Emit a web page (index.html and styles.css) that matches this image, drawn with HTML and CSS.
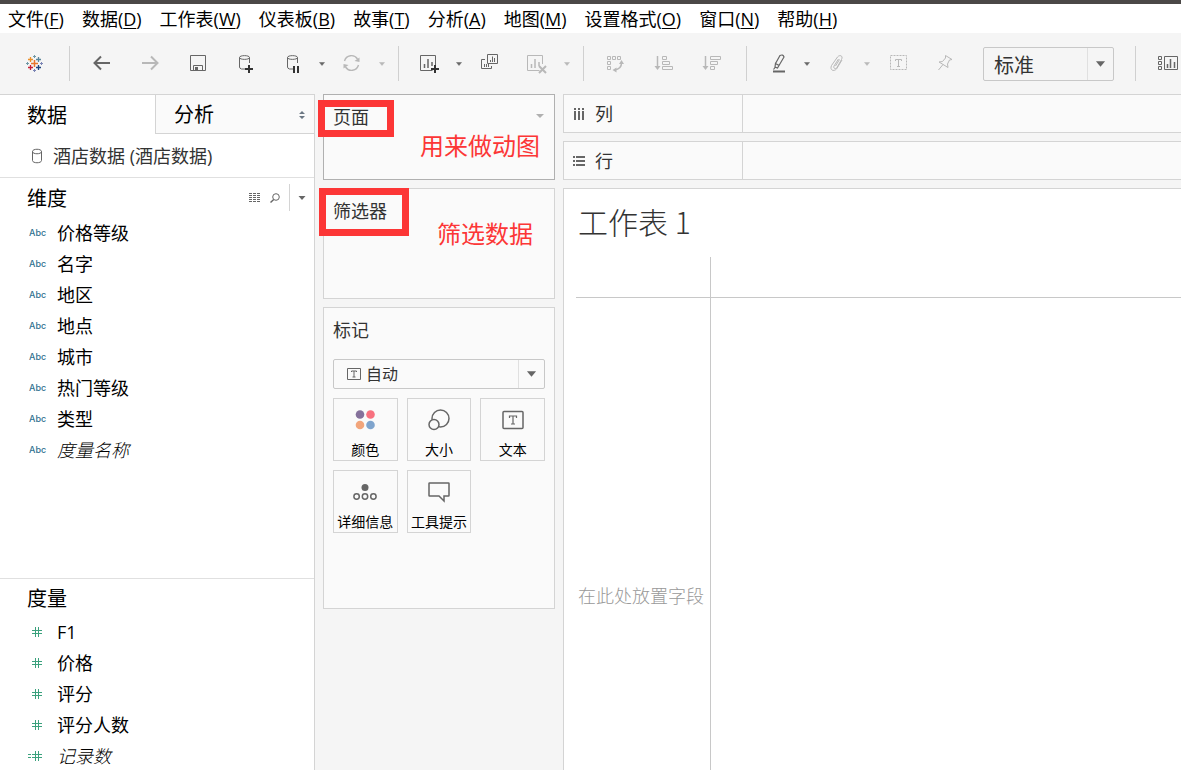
FILE: index.html
```html
<!DOCTYPE html>
<html lang="zh-CN">
<head>
<meta charset="utf-8">
<meta name="viewport" content="width=device-width, initial-scale=1">
<title>工作表 1</title>
<link rel="stylesheet" href="styles.css">
</head>
<body>
<svg class="sprite" aria-hidden="true">
  <symbol id="caret" viewBox="0 0 12 12"><path d="M3.500 4.500h5L6 7.500z" fill="currentColor" stroke="currentColor" stroke-width=".5"/></symbol>
  <symbol id="arrow" viewBox="0 0 12 12"><path d="M1 3h10L6 9z" fill="currentColor"/></symbol>
  <symbol id="db" viewBox="0 0 24 24"><path d="M11 18H7.500Q5.500 17.500 5.500 16V6.500C5.500 4 15.500 4 15.500 6.500V12M5.500 6.500C5.500 9 15.500 9 15.500 6.500" fill="none" stroke="currentColor"/></symbol>
  <symbol id="hash" viewBox="0 0 16 16"><path d="M6.500 3v10M9.500 3v10M3 6.500h10M3 9.500h10" fill="none" stroke="currentColor"/></symbol>
</svg>
<div class="app">
  <div class="strip"></div>
  <nav class="menu">
    <button>文件(<u>F</u>)</button>
    <button>数据(<u>D</u>)</button>
    <button>工作表(<u>W</u>)</button>
    <button>仪表板(<u>B</u>)</button>
    <button>故事(<u>T</u>)</button>
    <button>分析(<u>A</u>)</button>
    <button>地图(<u>M</u>)</button>
    <button>设置格式(<u>O</u>)</button>
    <button>窗口(<u>N</u>)</button>
    <button>帮助(<u>H</u>)</button>
  </nav>

  <div class="toolbar">
    <div class="group group-home">
      <button class="tool" aria-label="开始页面"><svg viewBox="0 0 24 24" fill="none">
        <path d="M12.500 9v7M9 12.500h7" stroke="#e8762c" stroke-width="1.500"/>
        <path d="M8.500 6v5M6 8.500h5" stroke="#eb912b" stroke-width="1.300"/>
        <path d="M16.500 6v5M14 8.500h5" stroke="#5b879b" stroke-width="1.300"/>
        <path d="M8.500 14v5M6 16.500h5" stroke="#c72035" stroke-width="1.300"/>
        <path d="M16.500 14v5M14 16.500h5" stroke="#1f457e" stroke-width="1.300"/>
        <path d="M12.500 4v3M11 5.500h3M5.500 11v3M4 12.500h3" stroke="#7099a6"/>
        <path d="M19.500 11v3M18 12.500h3M12.500 18v3M11 19.500h3" stroke="#7b85b5"/></svg></button>
    </div>
    <div class="group">
      <button class="tool" aria-label="撤消"><svg viewBox="0 0 24 24" fill="none" stroke="currentColor" stroke-width="2"><path d="M20 12H5M11 5.500L4.500 12l6.500 6.500"/></svg></button>
      <button class="tool" aria-label="重做" disabled><svg viewBox="0 0 24 24" fill="none" stroke="currentColor" stroke-width="2"><path d="M4 12h15M13 5.500l6.500 6.500-6.500 6.500"/></svg></button>
      <button class="tool" aria-label="保存"><svg viewBox="0 0 24 24" fill="none" stroke="currentColor"><path d="M4.500 4.500h15v15h-15zM7.500 19.500v-5h9v5"/><path d="M9 16h3v3H9z" fill="currentColor" stroke="none"/></svg></button>
      <button class="tool" aria-label="新建数据源"><svg viewBox="0 0 24 24"><use href="#db"/><path d="M15 14v8M11 18h8" stroke="#333" stroke-width="2"/></svg></button>
      <span class="split">
        <button class="tool" aria-label="暂停自动更新"><svg viewBox="0 0 24 24"><use href="#db"/><path d="M12 15v7M16 15v7" stroke="#333" stroke-width="2"/></svg></button>
        <button class="drop" aria-label="更新选项"><svg><use href="#caret"/></svg></button>
      </span>
      <span class="split">
        <button class="tool" aria-label="运行更新" disabled><svg viewBox="0 0 24 24" fill="none" stroke="currentColor" stroke-width="1.400"><path d="M2.500 10a7.200 7.200 0 0 1 13-2M16.500 14a7.200 7.200 0 0 1-13 2"/><path d="M17.500 6.500v4.500l-5-1zM1.500 17.500V13l5 1z" fill="currentColor" stroke="none"/></svg></button>
        <button class="drop" aria-label="运行更新选项" disabled><svg><use href="#caret"/></svg></button>
      </span>
    </div>
    <div class="group">
      <span class="split">
        <button class="tool" aria-label="新建工作表"><svg viewBox="0 0 24 24" fill="none" stroke="currentColor"><path d="M13.500 19.500h-12v-15h15V14"/><path d="M5.500 17v-4M9 17V8M13 15v-4" stroke-width="1.500"/><path d="M16 14v8M12 18h8" stroke="#333" stroke-width="2"/></svg></button>
        <button class="drop" aria-label="新建选项"><svg><use href="#caret"/></svg></button>
      </span>
      <button class="tool" aria-label="复制"><svg viewBox="0 0 24 24" fill="none" stroke="currentColor"><path d="M8.500 3.500h10v9h-10zM6 8.500H2.500v9h10V15"/><path d="M11.500 11V9M13.500 11V5.500M15.500 11V7M5.500 16v-3M7.500 16v-3M9.500 16v-3"/></svg></button>
      <span class="split">
        <button class="tool" aria-label="清除工作表" disabled><svg viewBox="0 0 24 24" fill="none" stroke="currentColor"><path d="M12.500 19.500h-12v-15h15V13"/><path d="M4.500 17v-4M8 17V8M12 15v-4" stroke-width="1.500"/><path d="M12 15l7 7M19 15l-7 7" stroke-width="2"/></svg></button>
        <button class="drop" aria-label="清除选项" disabled><svg><use href="#caret"/></svg></button>
      </span>
    </div>
    <div class="group group-sort">
      <button class="tool" aria-label="交换行和列" disabled><svg viewBox="0 0 24 24" fill="none" stroke="currentColor"><path d="M3.500 5.500h3v3h-3zM8.500 5.500h3v3h-3zM13.500 5.500h3v3h-3zM3.500 10.500h3v3h-3zM3.500 15.500h3v3h-3z"/><path d="M17.500 12q0 6-7 7" stroke-width="1.500"/><path d="M17.500 9l2.500 4h-5zM8.500 19l4-2.500v5z" fill="currentColor" stroke="none"/></svg></button>
      <button class="tool" aria-label="升序排序" disabled><svg viewBox="0 0 24 24" fill="none" stroke="currentColor"><path d="M5.500 5v11" stroke-width="1.500"/><path d="M2.500 15h6l-3 4z" fill="currentColor" stroke="none"/><path d="M10.500 5.500h4v3h-4zM10.500 10.500h7v3h-7zM10.500 15.500h10v3h-10z"/></svg></button>
      <button class="tool" aria-label="降序排序" disabled><svg viewBox="0 0 24 24" fill="none" stroke="currentColor"><path d="M5.500 5v11" stroke-width="1.500"/><path d="M2.500 15h6l-3 4z" fill="currentColor" stroke="none"/><path d="M10.500 5.500h10v3h-10zM10.500 10.500h7v3h-7zM10.500 15.500h4v3h-4z"/></svg></button>
    </div>
    <div class="group group-format">
      <span class="split">
        <button class="tool" aria-label="突出显示"><svg viewBox="0 0 24 24" fill="none" stroke="currentColor" stroke-width="1.200"><path d="M8.500 12.500L13 4.500q3-1.500 4 1.500L12 14.500zM8.500 12.500l3.500 2-1.500 2.500-2.500-1zM8 16.500L6.500 18.500"/><path d="M6 20.500h12" stroke-width="2"/></svg></button>
        <button class="drop" aria-label="突出显示选项"><svg><use href="#caret"/></svg></button>
      </span>
      <span class="split">
        <button class="tool" aria-label="组成员" disabled><svg viewBox="0 0 24 24" fill="none" stroke="currentColor"><path d="M11.500 8L7 15c-1 2.500 1.500 3.500 3 1.500L14.500 8.500c2-4-2-5-4-2.500L4.500 14.500c-2 4.500 2 6.500 5 3.500l5.500-9M12.500 8.500l-4 6.500"/></svg></button>
        <button class="drop" aria-label="组成员选项" disabled><svg><use href="#caret"/></svg></button>
      </span>
      <button class="tool" aria-label="显示标记标签" disabled><svg viewBox="0 0 24 24" fill="none" stroke="currentColor"><path d="M3.500 4.500h16v14h-16z" stroke-dasharray="2 1"/><path d="M8.500 10V8.500h6V10M11.500 8.500v7M10 15.500h3"/></svg></button>
      <button class="tool" aria-label="固定轴" disabled><svg viewBox="0 0 24 24" fill="none" stroke="currentColor"><path d="M10.500 4.500l6.500 4-2.500.500-2 4 .5 3.500-9-5.500 3.500-.5 3-3.500zM8 13.500L3.500 19"/></svg></button>
    </div>
    <div class="picker fit">
      <select aria-label="适合"><option>标准</option></select>
      <svg class="picker-arrow"><use href="#arrow"/></svg>
    </div>
    <div class="group group-show">
      <button class="tool" aria-label="显示卡"><svg viewBox="0 0 24 24" fill="none" stroke="currentColor"><path d="M2.500 5.500h3v3h-3zM2.500 10.500h3v3h-3zM2.500 15.500h3v3h-3zM8.500 5.500h13v13h-13z"/><path d="M11.500 17v-4M14.500 17V8M18.500 17v-6" stroke-width="1.500"/></svg></button>
    </div>
  </div>

  <main class="workspace">
    <aside class="data-pane">
      <div class="tabs" role="tablist">
        <button class="tab active" role="tab" aria-selected="true">数据</button>
        <button class="tab" role="tab" aria-selected="false">分析<svg viewBox="0 0 8 10" fill="currentColor"><path d="M1 4h6L4 1zM1 6h6L4 9z"/></svg></button>
      </div>
      <button class="source"><svg viewBox="0 0 16 16" fill="none" stroke="currentColor"><path d="M3.500 3.500C3.500.5 12.500.5 12.500 3.500v9c0 3-9 3-9 0zM3.500 3.500c0 3 9 3 9 0"/></svg>酒店数据 (酒店数据)</button>
      <section class="fields dimensions">
        <header>
          <h2>维度</h2>
          <button aria-label="列表视图"><svg viewBox="0 0 12 12" stroke="currentColor" fill="none"><path d="M0 1.500h12M0 3.500h12M0 5.500h12M0 7.500h12M0 9.500h12" stroke-dasharray="3 1"/></svg></button>
          <button aria-label="查找"><svg viewBox="0 0 12 12" stroke="currentColor" fill="none"><circle cx="7" cy="5" r="3.300"/><path d="M4.700 7.500L1.500 10.500" stroke-width="1.500"/></svg></button>
          <button class="more" aria-label="维度选项"><svg viewBox="0 0 12 12" fill="currentColor"><path d="M2.500 4h7L6 8z"/></svg></button>
        </header>
        <ul>
          <li><i>Abc</i>价格等级</li>
          <li><i>Abc</i>名字</li>
          <li><i>Abc</i>地区</li>
          <li><i>Abc</i>地点</li>
          <li><i>Abc</i>城市</li>
          <li><i>Abc</i>热门等级</li>
          <li><i>Abc</i>类型</li>
          <li class="generated"><i>Abc</i><em>度量名称</em></li>
        </ul>
      </section>
      <section class="fields measures">
        <header><h2>度量</h2></header>
        <ul>
          <li><svg><use href="#hash"/></svg>F1</li>
          <li><svg><use href="#hash"/></svg>价格</li>
          <li><svg><use href="#hash"/></svg>评分</li>
          <li><svg><use href="#hash"/></svg>评分人数</li>
          <li class="generated"><svg viewBox="0 0 16 16"><use href="#hash"/><path d="M-1 6.500h3M-1 9.500h3" stroke="currentColor"/></svg><em>记录数</em></li>
        </ul>
      </section>
    </aside>

    <div class="cards">
      <section class="card pages">
        <h3>页面</h3>
        <svg class="card-caret" viewBox="0 0 8 8" fill="currentColor"><path d="M0 2h8L4 6z"/></svg>
        <div class="mark-box"></div>
        <p class="note">用来做动图</p>
      </section>
      <section class="card filters">
        <h3>筛选器</h3>
        <div class="mark-box"></div>
        <p class="note">筛选数据</p>
      </section>
      <section class="card marks">
        <h3>标记</h3>
        <div class="picker mark-type">
          <svg class="picker-icon" viewBox="0 0 14 12" fill="none" stroke="currentColor"><path d="M.5.500h13v11H.500zM4.500 4V3h5v1M7 3v6M5.500 9h3"/></svg>
          <select aria-label="标记类型"><option>自动</option></select>
          <svg class="picker-arrow"><use href="#arrow"/></svg>
        </div>
        <div class="mark-grid">
          <button><svg viewBox="0 0 24 24"><circle cx="7" cy="6.500" r="4.300" fill="#85719b"/><circle cx="17.500" cy="6.500" r="4.300" fill="#f8717f"/><circle cx="7" cy="17" r="4.300" fill="#f2a57b"/><circle cx="17.500" cy="17" r="4.300" fill="#7fa4cd"/></svg>颜色</button>
          <button><svg viewBox="0 0 24 24" fill="none" stroke="currentColor" stroke-width="1.500"><circle cx="13.500" cy="10.500" r="8.500"/><circle cx="7" cy="16.500" r="5" fill="#fafafa"/></svg>大小</button>
          <button><svg viewBox="0 0 24 24" fill="none" stroke="currentColor" stroke-width="1.500"><rect x="2" y="3.500" width="20" height="17" rx="1"/><path d="M8.500 10V8h7v2M12 8v8M10 16h4" stroke-width="1.200"/></svg>文本</button>
          <button><svg viewBox="0 0 24 24" fill="none" stroke="currentColor" stroke-width="1.500"><circle cx="12" cy="7.500" r="3.500" fill="currentColor" stroke="none"/><circle cx="3.600" cy="16.500" r="2.700"/><circle cx="12" cy="16.500" r="2.700"/><circle cx="20.400" cy="16.500" r="2.700"/></svg>详细信息</button>
          <button><svg viewBox="0 0 24 24" fill="none" stroke="currentColor" stroke-width="1.500"><path d="M2.500 3h19q.5 0 .5.500v12q0 .5-.5.500H17v5l-5-5H2.500Q2 16 2 15.500v-12Q2 3 2.500 3z"/></svg>工具提示</button>
        </div>
      </section>
    </div>

    <div class="view">
      <div class="shelf">
        <div class="shelf-name"><svg viewBox="0 0 14 14" fill="currentColor"><path d="M2 1h2v2H2zM6 1h2v2H6zM10 1h2v2h-2zM2 4h2v9H2zM6 4h2v9H6zM10 4h2v9h-2z"/></svg>列</div>
      </div>
      <div class="shelf">
        <div class="shelf-name"><svg viewBox="0 0 14 14" fill="currentColor"><path d="M1 2h2v2H1zM1 6h2v2H1zM1 10h2v2H1zM4 2h9v2H4zM4 6h9v2H4zM4 10h9v2H4z"/></svg>行</div>
      </div>
      <div class="sheet">
        <h1>工作表 1</h1>
        <div class="canvas">
          <div class="cell corner"></div>
          <div class="cell column-head"></div>
          <div class="cell row-head">在此处放置字段</div>
          <div class="cell"></div>
        </div>
      </div>
    </div>
  </main>
</div>
</body>
</html>
```

FILE: styles.css
```css
* { box-sizing: border-box; }

body {
  margin: 0;
  color: #000;
  background: #f5f5f5;
  font: 400 18px/24px "Open Sans", "Noto Sans CJK SC", sans-serif;
}

h1, h2, h3, p, ul { margin: 0; padding: 0; font-weight: inherit; }
ul { list-style: none; }
svg { display: block; flex: none; color: #666; }

button, select {
  margin: 0;
  padding: 0;
  border: 0;
  background: none;
  color: inherit;
  font: inherit;
}

.sprite { position: absolute; width: 0; height: 0; }

.app {
  display: flex;
  flex-direction: column;
  height: 100vh;
  overflow: hidden;
}

.strip { flex: none; height: 4px; background: #4b4847; }

/* Menu bar */
.menu {
  display: flex;
  flex: none;
  gap: 18px;
  height: 29px;
  padding: 0 8px;
  background: #fff;
}
.menu button { white-space: nowrap; }
.menu u { text-underline-offset: 2px; text-decoration-thickness: 1px; }

/* Toolbar */
.toolbar {
  display: flex;
  flex: none;
  align-items: center;
  height: 61px;
}
.group {
  display: flex;
  flex: none;
  align-items: center;
  gap: 16px;
  height: 35px;
  padding: 0 16px;
  border-right: 1px solid #d0d0d0;
}
.group-home { padding: 0 19px 0 18px; }
.group-sort { padding-right: 18px; }
.group-format { padding-right: 20px; border-right: 0; }
.group-show { margin-left: 21px; border-right: 0; border-left: 1px solid #d0d0d0; }
.tool { width: 32px; height: 32px; padding: 3px 4px 5px; }
.tool svg { width: 24px; height: 24px; }
.split { display: flex; align-items: center; gap: 6px; margin-right: -6px; }
.drop { width: 12px; height: 24px; }
.drop svg { width: 12px; height: 12px; }
.toolbar button:disabled svg { color: #b8b8b8; }

/* Drop-down lists */
.picker {
  display: flex;
  flex: none;
  position: relative;
  border: 1px solid #c8c8c8;
  border-radius: 2px;
  background: #fafafa;
}
.picker select { flex: 1; appearance: none; color: #333; }
.picker-icon { position: absolute; align-self: center; left: 13px; width: 14px; height: 12px; pointer-events: none; }
.picker-arrow {
  position: absolute;
  top: 0;
  right: 0;
  width: 26px;
  height: 100%;
  padding: 0 7px;
  border-left: 1px solid #e0e0e0;
  pointer-events: none;
}
.fit { width: 131px; height: 34px; background: #f5f5f5; font-size: 20px; }
.fit select { padding: 4px 0 0 10px; }

/* Workspace */
.workspace {
  display: grid;
  flex: 1;
  grid-template-columns: 315px 232px minmax(0, 1fr);
  gap: 8px;
  min-height: 0;
}

/* Data pane */
.data-pane {
  display: flex;
  flex-direction: column;
  min-height: 0;
  border-top: 1px solid #d4d4d4;
  border-right: 1px solid #d4d4d4;
  background: #fff;
}
.tabs { display: grid; flex: none; grid-template-columns: 155px 1fr; height: 39px; font-size: 20px; }
.tab {
  display: flex;
  align-items: center;
  justify-content: space-between;
  padding: 2px 8px 0 18px;
  border-bottom: 1px solid #d4d4d4;
  border-left: 1px solid #d4d4d4;
  background: #fafafa;
}
.tab.active { padding-left: 27px; border: 0; background: #fff; }
.tab svg { width: 8px; height: 10px; color: #6b7783; }
.source {
  display: flex;
  flex: none;
  align-items: center;
  gap: 8px;
  height: 44px;
  padding-left: 29px;
  border-bottom: 1px solid #e0e0e0;
  color: #333;
}
.source svg { width: 16px; height: 16px; }

.fields { flex: 21 1 0; min-height: 0; overflow: hidden; }
.measures { flex-grow: 10; border-top: 1px solid #e0e0e0; }
.fields header { display: flex; align-items: center; height: 39px; padding-left: 27px; }
.fields.measures header { height: 37px; }
.fields h2 { flex: 1; padding-top: 2px; font-size: 20px; }
.fields header svg { width: 12px; height: 12px; }
.fields header button { padding: 0 4px; }
.fields header .more { height: 27px; margin-left: 4px; padding: 0 6px; border-left: 1px solid #d4d4d4; }
.fields li { display: flex; align-items: center; height: 31px; padding-left: 29px; }
.fields i {
  flex: none;
  width: 28px;
  color: #2f718f;
  font: 500 9px/12px Inter, sans-serif;
}
.fields em { font-weight: 300; }
.fields li svg { width: 16px; height: 16px; margin-right: 12px; overflow: visible; color: #3ba17d; }

/* Cards */
.cards { display: flex; flex-direction: column; gap: 8px; }
.card {
  position: relative;
  padding: 10px 9px;
  border: 1px solid #d4d4d4;
  background: #fafafa;
  color: #333;
}
.card h3 { font-size: 18px; }
.pages { height: 86px; border-color: #b0b0b0; }
.filters { height: 111px; }
.marks { height: 302px; }
.card-caret { position: absolute; top: 17px; right: 10px; width: 8px; height: 8px; color: #b0b0b0; }
.mark-box { position: absolute; border: 7px solid #fc3636; }
.pages .mark-box { top: 5px; left: -6px; width: 76px; height: 37px; }
.filters .mark-box { top: -1px; left: -5px; width: 90px; height: 48px; }
.note { position: absolute; color: #fc3636; font-size: 24px; line-height: 32px; }
.pages .note { top: 35px; left: 96px; }
.filters .note { top: 29px; left: 113px; }

.mark-type { height: 30px; margin: 17px 0 9px; font-size: 16px; }
.mark-type select { padding-left: 32px; }
.mark-grid { display: grid; grid-template-columns: repeat(3, 1fr); gap: 9px; }
.mark-grid button {
  display: flex;
  flex-direction: column;
  align-items: center;
  gap: 8px;
  height: 63px;
  padding-top: 9px;
  border: 1px solid #d4d4d4;
  color: #000;
  font-size: 14px;
  line-height: 20px;
  white-space: nowrap;
}
.mark-grid svg { width: 24px; height: 24px; }

/* View */
.view { display: flex; flex-direction: column; gap: 8px; min-height: 0; color: #333; }
.shelf { flex: none; height: 39px; border: 1px solid #d4d4d4; border-right: 0; background: #fafafa; }
.shelf-name {
  display: flex;
  align-items: center;
  gap: 9px;
  width: 179px;
  height: 100%;
  padding-left: 8px;
  border-right: 1px solid #d4d4d4;
}
.shelf-name svg { width: 14px; height: 14px; }
.sheet {
  flex: 1;
  min-height: 0;
  padding: 12px 0 0 12px;
  overflow: hidden;
  border: 1px solid #d4d4d4;
  border-right: 0;
  border-bottom: 0;
  background: #fff;
}
.sheet h1 { padding-left: 2px; font: 300 30px/40px "Noto Sans CJK SC", sans-serif; }
.canvas {
  display: grid;
  grid-template-columns: 135px 1fr;
  grid-template-rows: 41px minmax(596px, 1fr);
  margin-top: 16px;
}
.cell { border-right: 1px solid #c8c8c8; }
.cell:nth-child(even) { border-right: 0; }
.corner, .column-head { border-bottom: 1px solid #c8c8c8; }
.row-head { display: flex; align-items: center; padding-left: 2px; color: #999; font-weight: 300; white-space: nowrap; }
```
